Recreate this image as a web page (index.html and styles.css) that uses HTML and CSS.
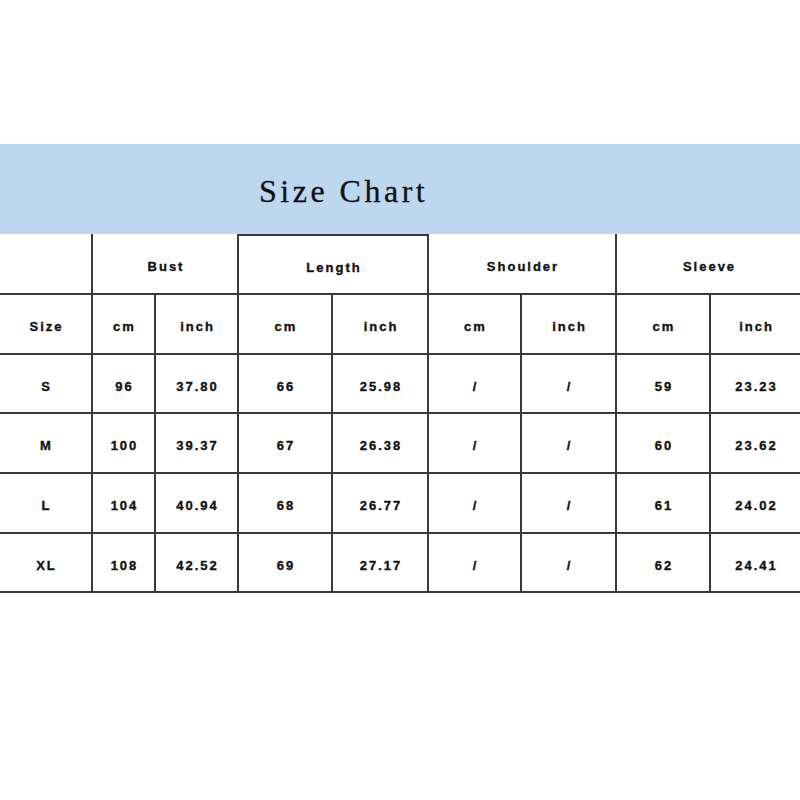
FILE: index.html
```html
<!DOCTYPE html>
<html>
<head>
<meta charset="utf-8">
<link rel="stylesheet" href="styles.css">
</head>
<body>
<div class="page">
  <div class="band"><h1 class="title">Size Chart</h1></div>
  <div class="chart">
    <div class="cell head first"></div>
    <div class="cell head span2 sep">Bust</div>
    <div class="cell head span2 sep topline">Length</div>
    <div class="cell head span2 sep">Shoulder</div>
    <div class="cell head span2 sep">Sleeve</div>

    <div class="cell first">Size</div>
    <div class="cell sep">cm</div><div class="cell sep">inch</div>
    <div class="cell sep">cm</div><div class="cell sep">inch</div>
    <div class="cell sep">cm</div><div class="cell sep">inch</div>
    <div class="cell sep">cm</div><div class="cell sep">inch</div>

    <div class="cell first">S</div>
    <div class="cell sep">96</div><div class="cell sep">37.80</div>
    <div class="cell sep">66</div><div class="cell sep">25.98</div>
    <div class="cell sep">/</div><div class="cell sep">/</div>
    <div class="cell sep">59</div><div class="cell sep">23.23</div>

    <div class="cell first">M</div>
    <div class="cell sep">100</div><div class="cell sep">39.37</div>
    <div class="cell sep">67</div><div class="cell sep">26.38</div>
    <div class="cell sep">/</div><div class="cell sep">/</div>
    <div class="cell sep">60</div><div class="cell sep">23.62</div>

    <div class="cell first">L</div>
    <div class="cell sep">104</div><div class="cell sep">40.94</div>
    <div class="cell sep">68</div><div class="cell sep">26.77</div>
    <div class="cell sep">/</div><div class="cell sep">/</div>
    <div class="cell sep">61</div><div class="cell sep">24.02</div>

    <div class="cell first">XL</div>
    <div class="cell sep">108</div><div class="cell sep">42.52</div>
    <div class="cell sep">69</div><div class="cell sep">27.17</div>
    <div class="cell sep">/</div><div class="cell sep">/</div>
    <div class="cell sep">62</div><div class="cell sep">24.41</div>
  </div>
</div>
</body>
</html>
```

FILE: styles.css
```css
html, body {
  margin: 0;
  padding: 0;
  background: #ffffff;
}

.page {
  width: 800px;
  height: 800px;
  padding-top: 144px;
  box-sizing: border-box;
}

.band {
  height: 90px;
  background: #bdd7ee;
  box-sizing: border-box;
  padding: 31px 0 0 259px;
}

.title {
  margin: 0;
  font-family: "Liberation Serif", serif;
  font-weight: normal;
  font-size: 32px;
  line-height: 32px;
  letter-spacing: 3.5px;
  color: #111;
  -webkit-text-stroke: 0.3px #111;
}

.chart {
  display: grid;
  grid-template-columns: 91px 63px 83px 94px 96px 93px 95px 94px 91px;
  grid-template-rows: 61px 60px 59px 60px 60px 59px;
}

.cell {
  box-sizing: border-box;
  border-bottom: 2px solid #3a3a3a;
  display: flex;
  align-items: center;
  justify-content: center;
  padding: 5px 0 0 2px;
  font-family: "Liberation Sans", sans-serif;
  font-weight: bold;
  font-size: 13px;
  letter-spacing: 2px;
  color: #111;
  -webkit-text-stroke: 0.35px #111;
}

.sep {
  border-left: 2px solid #3a3a3a;
}

.span2 {
  grid-column: span 2;
}

.topline {
  border-top: 2px solid #3a3a3a;
}
```
